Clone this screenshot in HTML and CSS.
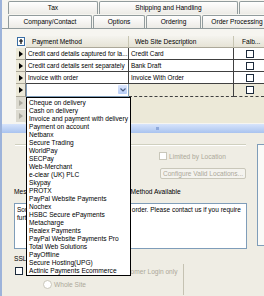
FILE: index.html
```html
<!DOCTYPE html>
<html lang="en">
<head>
    <meta charset="UTF-8">
    <title>Payment Methods</title>
    <link rel="stylesheet" href="styles.css">
</head>
<body>
    <div class="screen">
        <div class="tabs">
            <div class="tab-row">
                <div class="tab w-tax">Tax</div>
                <div class="tab w-ship">Shipping and Handling</div>
                <div class="tab w-rest"></div>
            </div>
            <div class="tab-row">
                <div class="tab w-company">Company/Contact</div>
                <div class="tab w-options">Options</div>
                <div class="tab w-ordering">Ordering</div>
                <div class="tab w-proc">Order Processing</div>
            </div>
        </div>

        <div class="page">
            <div class="grid">
                <div class="row head">
                    <div class="rh">
                        <svg width="8" height="9" viewBox="0 0 8 9"><rect x="0.5" y="0.5" width="7" height="8" fill="#fff" stroke="#3a6ea5"/><path d="M4 2v5M2 4h4" stroke="#000" stroke-width="1.2"/></svg>
                    </div>
                    <div class="cell c-pm">Payment Method</div>
                    <div class="cell c-ws">Web Site Description</div>
                    <div class="cell c-fb">Falb...</div>
                </div>
                <div class="row">
                    <div class="rh"><span class="arrow"></span></div>
                    <div class="cell c-pm">Credit card details captured for la...</div>
                    <div class="cell c-ws">Credit Card</div>
                    <div class="cell c-fb"><span class="chk"></span></div>
                </div>
                <div class="row">
                    <div class="rh"><span class="arrow"></span></div>
                    <div class="cell c-pm">Credit card details sent separately</div>
                    <div class="cell c-ws">Bank Draft</div>
                    <div class="cell c-fb"><span class="chk"></span></div>
                </div>
                <div class="row">
                    <div class="rh"><span class="arrow"></span></div>
                    <div class="cell c-pm">Invoice with order</div>
                    <div class="cell c-ws">Invoice With Order</div>
                    <div class="cell c-fb"><span class="chk"></span></div>
                </div>
                <div class="row new">
                    <div class="rh"><span class="arrow"></span></div>
                    <div class="cell c-pm combo">
                        <span class="combo-btn">
                            <svg width="6" height="4" viewBox="0 0 6 4"><path d="M0.5 0.5L3 3 5.5 0.5" fill="none" stroke="#4d6185" stroke-width="1.2"/></svg>
                        </span>
                    </div>
                    <div class="cell c-ws dashed"></div>
                    <div class="cell c-fb dashed"><span class="chk"></span></div>
                </div>
                <div class="row empty">
                    <div class="rh faded"><span class="arrow"></span></div>
                </div>
                <div class="row empty">
                    <div class="rh faded"><span class="arrow"></span></div>
                </div>
            </div>

            <div class="splitter"><span class="grip"></span></div>

            <div class="lower">
                <div class="lower-main">
                    <div class="group-line"></div>
                    <div class="loc-row">
                        <span class="chk disabled"></span>
                        <span class="muted">Limited by Location</span>
                    </div>
                    <div class="btn-row">
                        <button class="btn" disabled>Configure Valid Locations...</button>
                    </div>
                    <div class="field-label">Message to Display When No Payment Method Available</div>
                    <div class="textbox">Sorry, no payment method available for order. Please contact us if you require further assistance.</div>
                    <div class="field-label ssl-label">SSL</div>
                    <div class="ssl-row">
                        <div class="ssl-opts">
                            <div class="ssl-on">
                                <span class="chk"></span>
                                <span>On</span>
                            </div>
                            <div class="radios">
                                <div class="radio-row"><span class="radio"></span><span class="muted">Checkout Pages and Customer Login only</span></div>
                                <div class="radio-row"><span class="radio"></span><span class="muted">Whole Site</span></div>
                            </div>
                        </div>
                    </div>
                </div>
                <div class="lower-side">
                    <div class="side-box"></div>
                </div>
            </div>
        </div>

        <ul class="droplist">
            <li>Cheque on delivery</li>
            <li>Cash on delivery</li>
            <li>Invoice and payment with delivery</li>
            <li>Payment on account</li>
            <li>Netbanx</li>
            <li>Secure Trading</li>
            <li>WorldPay</li>
            <li>SECPay</li>
            <li>Web-Merchant</li>
            <li>e-clear (UK) PLC</li>
            <li>Skypay</li>
            <li>PROTX</li>
            <li>PayPal Website Payments</li>
            <li>Nochex</li>
            <li>HSBC Secure ePayments</li>
            <li>Metacharge</li>
            <li>Realex Payments</li>
            <li>PayPal Website Payments Pro</li>
            <li>Total Web Solutions</li>
            <li>PayOffline</li>
            <li>Secure Hosting(UPG)</li>
            <li>Actinic Payments Ecommerce</li>
        </ul>
    </div>
</body>
</html>
```

FILE: styles.css
```css
body {
    margin: 0;
    padding: 0;
    font-family: Tahoma, "Liberation Sans", Arial, sans-serif;
    font-size: 6.6px;
    color: #000;
    background-color: #f6f5f0;
}

.screen {
    position: relative;
    width: 264px;
    height: 296px;
    overflow: hidden;
    border-left: 2px solid #9db3da;
    box-sizing: border-box;
}

/* tab strip */
.tabs {
    height: 29px;
    padding: 1px 0 0 6px;
    box-sizing: border-box;
    border-bottom: 1px solid #919b9c;
}

.tab-row {
    display: flex;
    height: 14px;
}

.tab {
    flex-shrink: 0;
    height: 13px;
    line-height: 12px;
    text-align: center;
    white-space: nowrap;
    border: 1px solid #919b9c;
    border-bottom: none;
    border-radius: 2px 2px 0 0;
    background: linear-gradient(#fefefe, #ecebe6);
    margin-right: 1px;
    box-sizing: border-box;
}

.w-tax { width: 90px; }
.w-ship { width: 139px; }
.w-rest { width: 40px; }
.w-company { width: 84px; }
.w-options { width: 52px; }
.w-ordering { width: 55px; }
.w-proc { width: 70px; }

/* grid */
.page {
    padding-top: 7px;
}

.grid {
    margin-left: 14px;
    height: 87px;
    background-color: #ece9d8;
}

.row {
    display: flex;
    height: 12px;
    box-sizing: border-box;
}

.row.new,
.row.empty {
    height: 13px;
}

.rh {
    width: 10px;
    flex-shrink: 0;
    display: flex;
    align-items: center;
    justify-content: center;
    background-color: #ece9d8;
    border-right: 1px solid #808080;
    border-bottom: 1px solid #aca899;
    box-sizing: border-box;
}

.head .rh {
    background-color: #f6f5f0;
    border-color: transparent;
}

.rh.faded {
    background-color: #dcdad0;
    border-bottom-color: #f6f5f0;
    border-right-color: #dcdad0;
}

.arrow {
    width: 0;
    height: 0;
    border-top: 3px solid transparent;
    border-bottom: 3px solid transparent;
    border-left: 4px solid #000;
}

.faded .arrow {
    border-left-color: #aaa89e;
}

.cell {
    height: 100%;
    padding-left: 2px;
    font-size: 6.4px;
    line-height: 11px;
    white-space: nowrap;
    overflow: hidden;
    background-color: #fff;
    border-right: 1px solid #404040;
    border-bottom: 1px solid #404040;
    box-sizing: border-box;
}

.c-pm { width: 103px; flex-shrink: 0; }
.c-ws { width: 105px; flex-shrink: 0; }
.c-fb {
    flex: 1;
    border-right: none;
    display: flex;
    align-items: center;
    padding-left: 12px;
}

.head .cell {
    font-size: 6.6px;
    background: linear-gradient(#f4f3ee, #e6e3d5);
    border-right: 1px solid #c7c5b2;
    border-bottom: 1px solid #aca899;
    padding-left: 6px;
}

.head .c-fb {
    padding-left: 8px;
    border-right: none;
}

.combo {
    position: relative;
    border: 1px solid #7f9db9;
    border-top: none;
}

.combo-btn {
    position: absolute;
    right: 1px;
    top: 1px;
    width: 9px;
    height: 9px;
    display: flex;
    align-items: center;
    justify-content: center;
    background: linear-gradient(#dbe6fc, #b7cdf7);
    border-radius: 1px;
}

.dashed {
    background-color: #ece9d8;
    border-bottom: 1px dashed #404040;
}

.chk {
    display: inline-block;
    width: 6px;
    height: 6px;
    border: 1px solid #1c2a3b;
    background-color: #fff;
    flex-shrink: 0;
}

.chk.disabled {
    border-color: #c9c7ba;
}

/* splitter */
.splitter {
    position: relative;
    height: 9px;
    margin-top: 1px;
    background: linear-gradient(#d7e4fb, #a9c3ef);
}

.grip {
    position: absolute;
    left: 154px;
    top: 3px;
    width: 3px;
    height: 3px;
    background-color: #8ea9dc;
}

/* lower panel */
.lower {
    display: flex;
    height: 170px;
    background-color: #efede4;
}

.lower-main {
    width: 250px;
    flex-shrink: 0;
    padding-top: 11px;
}

.lower-side {
    padding: 11px 0 0 5px;
}

.side-box {
    width: 20px;
    height: 100px;
    border: 1px solid #7f9db9;
    background-color: #fafaf7;
}

.group-line {
    margin-left: 13px;
    width: 231px;
    border-top: 1px solid #d0d0bf;
    border-bottom: 1px solid #fff;
}

.loc-row {
    display: flex;
    align-items: center;
    gap: 2px;
    margin: 6px 0 0 157px;
    height: 8px;
}

.muted {
    color: #aca899;
    white-space: nowrap;
}

.btn-row {
    margin: 8px 0 0 158px;
}

.btn {
    width: 86px;
    height: 11px;
    padding: 0;
    font-family: inherit;
    font-size: 6.6px;
    color: #aca899;
    background-color: #f4f3ee;
    border: 1px solid #c9c7ba;
    border-radius: 2px;
}

.field-label {
    margin: 9px 0 0 12px;
    height: 8px;
    line-height: 8px;
    white-space: nowrap;
}

.textbox {
    margin: 7px 0 0 12px;
    width: 233px;
    height: 46px;
    padding: 2px 2px;
    font-size: 6.5px;
    line-height: 8px;
    background-color: #fff;
    border: 1px solid #7f9db9;
    box-sizing: border-box;
}

.ssl-label {
    margin-top: 6px;
}

.ssl-row {
    margin-top: 1px;
}

.ssl-opts {
    display: flex;
    width: 181px;
    height: 31px;
    border-right: 1px solid #c5c2b2;
}

.ssl-on {
    display: flex;
    align-items: center;
    gap: 3px;
    margin: 3px 0 0 13px;
    height: 8px;
    width: 28px;
}

.radios {
    padding-top: 1px;
}

.radio-row {
    display: flex;
    align-items: center;
    gap: 2px;
    height: 13px;
}

.radio {
    width: 7px;
    height: 7px;
    border: 1px solid #c9c7ba;
    border-radius: 50%;
    background-color: #fff;
}

/* open dropdown list */
.droplist {
    position: absolute;
    left: 24px;
    top: 97px;
    width: 103px;
    margin: 0;
    padding: 1px 0 0;
    list-style: none;
    background-color: #fff;
    border: 1px solid #000;
}

.droplist li {
    height: 8px;
    line-height: 8px;
    padding-left: 2px;
    white-space: nowrap;
}
```
